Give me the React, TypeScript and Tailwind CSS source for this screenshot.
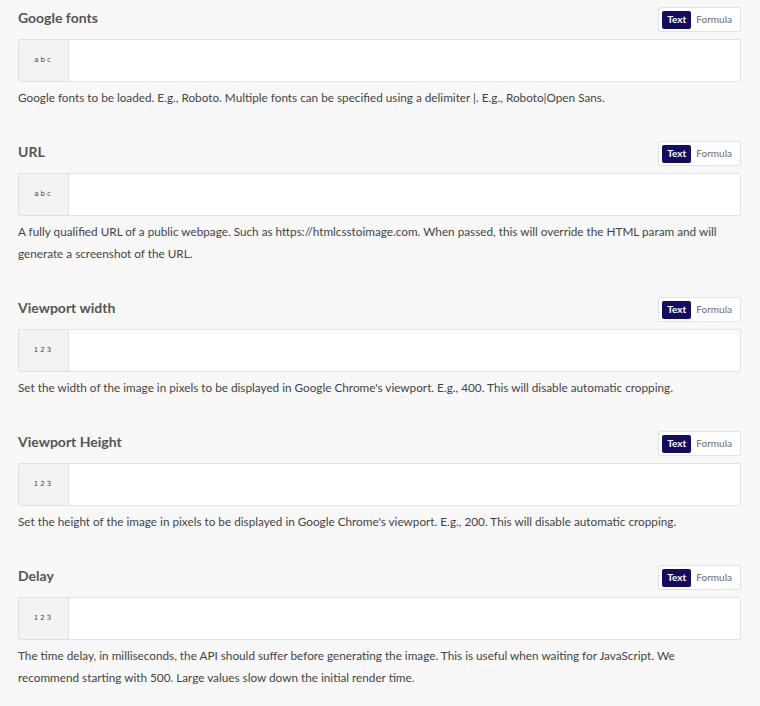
const fields = [
  {
    label: "Google fonts",
    kind: "abc",
    help: "Google fonts to be loaded. E.g., Roboto. Multiple fonts can be specified using a delimiter |. E.g., Roboto|Open Sans.",
  },
  {
    label: "URL",
    kind: "abc",
    help: "A fully qualified URL of a public webpage. Such as https://htmlcsstoimage.com. When passed, this will override the HTML param and will generate a screenshot of the URL.",
  },
  {
    label: "Viewport width",
    kind: "123",
    help: "Set the width of the image in pixels to be displayed in Google Chrome's viewport. E.g., 400. This will disable automatic cropping.",
  },
  {
    label: "Viewport Height",
    kind: "123",
    help: "Set the height of the image in pixels to be displayed in Google Chrome's viewport. E.g., 200. This will disable automatic cropping.",
  },
  {
    label: "Delay",
    kind: "123",
    help: "The time delay, in milliseconds, the API should suffer before generating the image. This is useful when waiting for JavaScript. We recommend starting with 500. Large values slow down the initial render time.",
  },
]

function ModeToggle() {
  return (
    <div className="flex items-center h-[25px] px-[3px] gap-[5px] bg-white border border-[#dde4ec] rounded-[2px]">
      <span className="flex items-center h-[18px] px-[5px] bg-[#120d63] text-white text-[10px] font-bold rounded-[2px]">
        Text
      </span>
      <span className="text-[10px] text-[#6b6b6b] pr-[5px]">Formula</span>
    </div>
  )
}

function Field({label, kind, help}: {label: string; kind: string; help: string}) {
  return (
    <div className="flex flex-col">
      <div className="flex items-center justify-between h-[25px]">
        <span className="mb-[4px] text-[14px] font-bold text-[#555555]">{label}</span>
        <ModeToggle />
      </div>
      <div className="mt-[7px] flex h-[43px] bg-white border border-[#d9e3ec] rounded-[2px]">
        <div className="w-[50px] flex items-center justify-center bg-[#f3f3f3] border-r border-[#d9e3ec] text-[7px] font-medium tracking-[2px] text-[#444] font-['DejaVu_Sans',sans-serif]">
          {kind}
        </div>
        <input className="flex-1 outline-none px-2 text-[13px] bg-white" />
      </div>
      <p className="mt-[5px] pr-[10px] text-[11.75px] leading-[22px] text-[#444444]">{help}</p>
    </div>
  )
}

export default function App() {
  return (
    <div className="min-h-[706px] bg-[#f8f8f8] pt-[7px] pl-[18px] pr-[19px] font-['Lato',sans-serif]">
      <div className="flex flex-col gap-[32px]">
        {fields.map(f => (
          <Field key={f.label} {...f} />
        ))}
      </div>
    </div>
  )
}
